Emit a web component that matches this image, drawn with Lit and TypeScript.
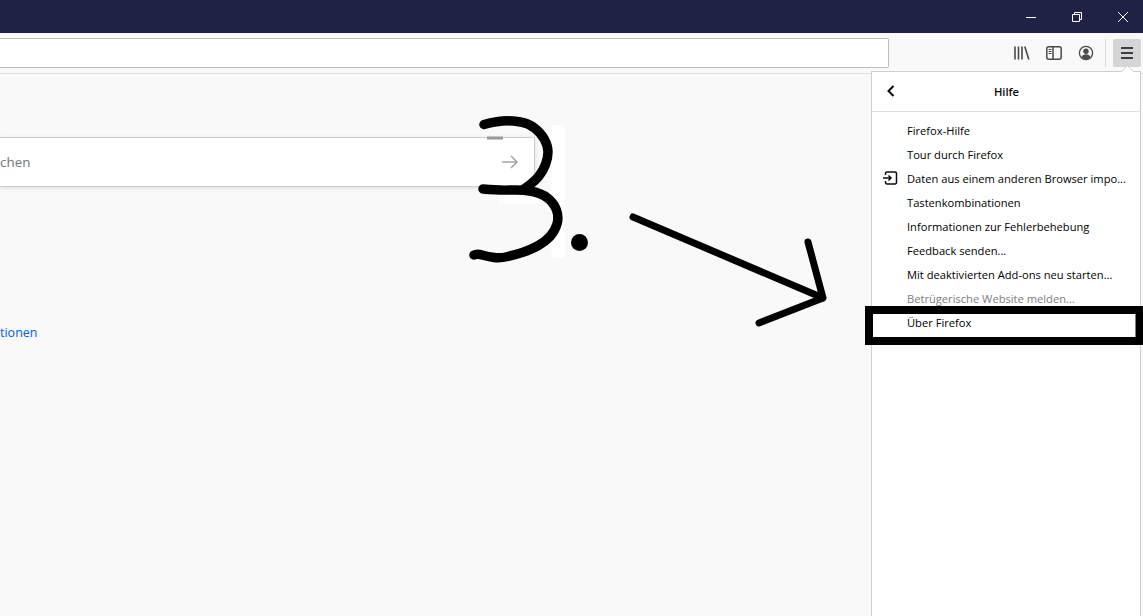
import { LitElement, html, css, svg } from "lit";
import { customElement } from "lit/decorators.js";

const items = [
  { t: "Firefox-Hilfe" },
  { t: "Tour durch Firefox" },
  { t: "Daten aus einem anderen Browser impo...", icon: true },
  { t: "Tastenkombinationen" },
  { t: "Informationen zur Fehlerbehebung" },
  { t: "Feedback senden..." },
  { t: "Mit deaktivierten Add-ons neu starten..." },
  { t: "Betrügerische Website melden...", off: true },
  { t: "Über Firefox" },
];

const smooth = (p: number[][]) => {
  let d = `M${p[0][0]} ${p[0][1]}`;
  for (let i = 1; i < p.length - 1; i++) {
    const mx = (p[i][0] + p[i + 1][0]) / 2;
    const my = (p[i][1] + p[i + 1][1]) / 2;
    d += `Q${p[i][0]} ${p[i][1]} ${mx} ${my}`;
  }
  const l = p[p.length - 1];
  return d + `L${l[0]} ${l[1]}`;
};

const upper = smooth([[484, 124.5], [495, 121.5], [510, 120.5], [528, 123], [541, 133], [548, 146], [548, 158], [543, 171], [535, 181], [524, 189]]);
const lower = smooth([[483, 189], [500, 190.5], [522, 189.5], [541, 193], [554, 203], [559, 217], [555, 231], [545, 242], [530, 250], [516, 254.5], [500, 258.5], [488, 256.5], [478, 254], [474, 255]]);

@customElement("app-root")
export class AppRoot extends LitElement {
  static styles = css`
    :host { display: block; width: 1143px; height: 616px; position: relative; overflow: hidden;
      font-family: "Open Sans", "Noto Sans", sans-serif; background: #f9f9fa; }
    .title { height: 33px; background: #1f2244; display: flex; justify-content: flex-end; }
    .controls { display: flex; margin-right: -3px; }
    .win { width: 46px; height: 33px; display: flex; align-items: center; justify-content: center; }
    .win svg { display: block; }
    .toolbar { height: 40px; box-sizing: border-box; background: #f9f9fa;
      display: flex; align-items: center; position: relative; }
    .url { width: 889px; height: 30px; box-sizing: border-box; background: #fff;
      border: 1px solid #bdbdbf; border-left: 0; border-radius: 0 2px 2px 0; flex: none; }
    .tools { margin-left: 117px; display: flex; align-items: center; }
    .tool { width: 32px; height: 28px; display: flex; align-items: center; justify-content: center; flex: none; }
    .sep { width: 1px; height: 28px; background: #dcdcde; margin: 0 7px 0 3px; }
    .burger { width: 28px; height: 28px; border-radius: 2px; background: #d5d5d7; display: flex; align-items: center; justify-content: center; }
    .page { position: relative; height: 543px; background: #f9f9fa; border-top: 1px solid #dfdfe1; box-sizing: border-box; padding-top: 63px; }
    .search { width: 535px; height: 50px; box-sizing: border-box; background: #fff; border: 1px solid #cfcfd1; border-left: 0;
      border-radius: 0 2px 2px 0; box-shadow: 0 1px 4px rgba(12,12,13,.12); display: flex; align-items: center; justify-content: space-between;
      font-size: 13.4px; color: #75757a; padding-right: 15px; }
    .link { margin-top: 137px; font-size: 12.5px; line-height: 17px; color: #0060df; }
    .panel { position: absolute; left: 871px; top: 71px; width: 270px; height: 545px; box-sizing: border-box; background: #fff;
      border: 1px solid #cfcfd1; border-bottom: 0; }
    .notch { position: absolute; left: 1121px; top: 65px; width: 13px; height: 13px; pointer-events: none; }
    .head { height: 40px; box-sizing: border-box; border-bottom: 1px solid #e0e0e2; display: flex; align-items: center; position: relative; justify-content: center;
      font-size: 11.2px; font-weight: 600; color: #0c0c0d; padding-left: 1px; }
    .back { position: absolute; left: 12px; top: 12px; }
    .list { padding-top: 6px; }
    .item { height: 24px; display: flex; align-items: center; padding-left: 35px; font-size: 11.15px; color: #000; position: relative; white-space: nowrap; }
    .item.off { color: #7d7d80; }
    .item svg { position: absolute; left: 10px; top: 4px; }
    .ink { position: absolute; inset: 0; width: 1143px; height: 616px; pointer-events: none; }
  `;

  render() {
    return html`
      <div class="title">
        <div class="controls">
          <div class="win"><svg width="12" height="12" viewBox="0 0 12 12"><path d="M1 6.5h10" stroke="#fff" fill="none"/></svg></div>
          <div class="win"><svg width="12" height="12" viewBox="0 0 12 12" fill="none" stroke="#fff"><path d="M1.5 3.5h7v7h-7zM3.5 3.5v-2h7v7h-2"/></svg></div>
          <div class="win"><svg width="12" height="12" viewBox="0 0 12 12" fill="none" stroke="#fff"><path d="M1 1l10 10M11 1L1 11"/></svg></div>
        </div>
      </div>
      <div class="toolbar">
        <div class="url"></div>
        <div class="tools">
          <div class="tool"><svg width="16" height="16" viewBox="0 0 16 16" fill="none" stroke="#4a4a4f" stroke-width="1.6"><path d="M1 1.5v13M4.5 1.5v13M8 1.5v13M10.8 1.5l4 13"/></svg></div>
          <div class="tool"><svg width="16" height="14" viewBox="0 0 16 14" fill="none" stroke="#4a4a4f"><rect x=".8" y=".8" width="14.4" height="12.4" rx="2" stroke-width="1.5"/><path d="M7 1v12" stroke-width="1.5"/><path d="M2.5 3.5h3M2.5 5.5h3M2.5 7.5h3"/></svg></div>
          <div class="tool"><svg width="16" height="16" viewBox="0 0 16 16"><circle cx="8" cy="8" r="6.6" fill="none" stroke="#4a4a4f" stroke-width="1.3"/><circle cx="8" cy="6.3" r="2.7" fill="#4a4a4f"/><path d="M3.6 12.2c.6-2.2 2.4-3 4.4-3s3.800.8 4.400 3c-1.100 1.200-2.700 2-4.400 2s-3.300-.8-4.400-2z" fill="#4a4a4f"/></svg></div>
        </div>
        <div class="sep"></div>
        <div class="burger"><svg width="14" height="12" viewBox="0 0 14 12" fill="none" stroke="#3d3d40" stroke-width="2"><path d="M1 1h12M1 6h12M1 11h12"/></svg></div>
      </div>
      <div class="page">
        <div class="search">
          <span>chen</span>
          <svg width="18" height="16" viewBox="0 0 18 16" fill="none" stroke="#a4a4a6" stroke-width="1.500"><path d="M1 8h15M10 2l6 6-6 6"/></svg>
        </div>
        <div class="link">tionen</div>
      </div>
      <div class="panel">
        <div class="head">
          <svg class="back" width="14" height="14" viewBox="0 0 14 14" fill="none" stroke="#0c0c0d" stroke-width="2"><path d="M9.500 2L4.500 7l5 5"/></svg>
          Hilfe
        </div>
        <div class="list">
          ${items.map(
            (i) => html`<div class="item ${i.off ? "off" : ""}">
              ${i.icon
                ? html`<svg width="16" height="16" viewBox="0 0 16 16" fill="none" stroke="#0c0c0d" stroke-width="1.500"><path d="M3.500 5V3.500a1.500 1.500 0 0 1 1.500-1.500h8a1.500 1.500 0 0 1 1.500 1.500v9a1.500 1.500 0 0 1-1.500 1.500H5a1.500 1.500 0 0 1-1.500-1.500V11"/><path d="M1 8h8M6.500 5.500L9 8l-2.500 2.500"/></svg>`
                : ""}
              ${i.t}
            </div>`
          )}
        </div>
      </div>
      <svg class="notch" viewBox="0 0 13 13"><path d="M0 7L6.500 .7 13 7" fill="#fff" stroke="#cfcfd1"/><path d="M1 8h11v5H1z" fill="#fff"/></svg>
      <svg class="ink" viewBox="0 0 1143 616" fill="none">
        ${svg`
          <path d="M558 125V258" stroke="#fff" stroke-width="13"/>
          <path d="M498 197H552" stroke="#fff" stroke-width="14" opacity=".7"/>
          <path d="M487 138H503" stroke="#999" stroke-width="3"/>
          <path d="${upper}" stroke="#000" stroke-width="9.500" stroke-linecap="round" stroke-linejoin="round"/>
          <path d="${lower}" stroke="#000" stroke-width="9.500" stroke-linecap="round" stroke-linejoin="round"/>
          <circle cx="579.500" cy="242.500" r="8.500" fill="#000"/>
          <path d="M633 217L823 298M808 242L823 298L759 323" stroke="#000" stroke-width="7" stroke-linecap="round" stroke-linejoin="round"/>
          <path d="M869 310H1139.500V341H869Z" stroke="#000" stroke-width="8"/>
        `}
      </svg>
    `;
  }
}
